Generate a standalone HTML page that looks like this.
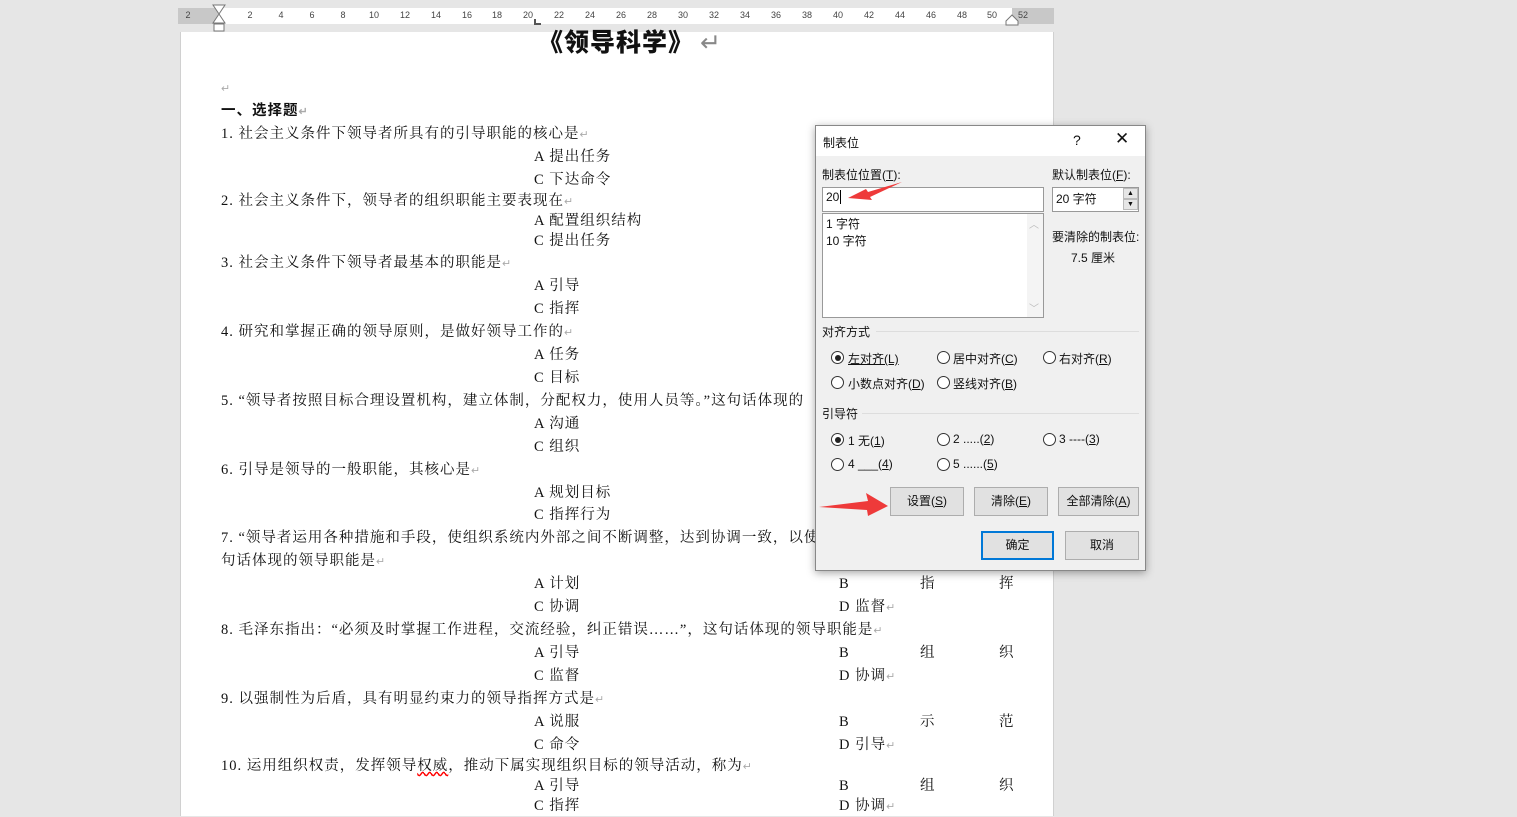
<!DOCTYPE html>
<html><head><meta charset="utf-8"><style>
*{margin:0;padding:0;box-sizing:border-box}
body{width:1517px;height:816px;background:#e6e6e6;position:relative;overflow:hidden;font-family:"Liberation Serif","Noto Serif CJK SC",serif}
.a{position:absolute;white-space:nowrap}
.page{position:absolute;left:180px;top:32px;width:874px;height:784px;background:#fff;border-left:1px solid #d0d0d0;border-right:1px solid #d0d0d0}
.t{position:absolute;white-space:nowrap;font-size:14.5px;line-height:20px;color:#111;letter-spacing:1px;margin-top:2px}
.r{color:#aaa;font-size:11px}
.rn{position:absolute;top:10px;font-family:"Liberation Sans",sans-serif;font-size:9px;color:#444;transform:translateX(-50%)}
.dlg{position:absolute;left:815px;top:125px;width:331px;height:446px;background:#f0f0f0;border:1px solid #888;box-shadow:0 2px 8px rgba(0,0,0,.35);font-family:"Liberation Sans","Noto Sans CJK SC",sans-serif;font-size:12px;color:#111}
.dlg .a{font-size:12px}
.btn{position:absolute;height:29px;background:#e1e1e1;border:1px solid #adadad;text-align:center;line-height:27px;font-size:12px}
.rad{position:absolute;width:13px;height:13px;border:1px solid #333;border-radius:50%;background:#fff;margin-top:-1px}
.rad.on::after{content:"";position:absolute;left:2.5px;top:2.5px;width:6px;height:6px;border-radius:50%;background:#222}
u{text-decoration:underline}
</style></head><body>
<div class="a" style="left:178px;top:8px;width:876px;height:16px;background:#c8c8c8"></div>
<div class="a" style="left:218px;top:8px;width:794px;height:16px;background:#fff"></div>
<div class="rn" style="left:188px">2</div>
<div class="rn" style="left:250px">2</div><div class="rn" style="left:281px">4</div><div class="rn" style="left:312px">6</div><div class="rn" style="left:343px">8</div><div class="rn" style="left:374px">10</div><div class="rn" style="left:405px">12</div><div class="rn" style="left:436px">14</div><div class="rn" style="left:467px">16</div><div class="rn" style="left:497px">18</div><div class="rn" style="left:528px">20</div><div class="rn" style="left:559px">22</div><div class="rn" style="left:590px">24</div><div class="rn" style="left:621px">26</div><div class="rn" style="left:652px">28</div><div class="rn" style="left:683px">30</div><div class="rn" style="left:714px">32</div><div class="rn" style="left:745px">34</div><div class="rn" style="left:776px">36</div><div class="rn" style="left:807px">38</div><div class="rn" style="left:838px">40</div><div class="rn" style="left:869px">42</div><div class="rn" style="left:900px">44</div><div class="rn" style="left:931px">46</div><div class="rn" style="left:962px">48</div><div class="rn" style="left:992px">50</div><div class="rn" style="left:1023px">52</div>
<svg class="a" style="left:212px;top:4px" width="14" height="28"><path d="M1 1H13L7 10L13 19H1L7 10Z" fill="#fff" stroke="#777"/><rect x="2" y="20" width="10" height="7" fill="#fff" stroke="#777"/></svg>
<svg class="a" style="left:1005px;top:13px" width="14" height="14"><path d="M1 12V8L7 2L13 8V12Z" fill="#fff" stroke="#777"/></svg>
<div class="a" style="left:534px;top:19px;width:7px;height:6px;border-left:2px solid #555;border-bottom:2px solid #555"></div>
<div class="page"></div>
<div class="a" style="left:538px;top:26px;font-family:'Liberation Sans','Noto Sans CJK SC',sans-serif;font-weight:900;font-size:25px;letter-spacing:1px;line-height:34px;color:#111">《领导科学》<span style="color:#888;font-weight:400;margin-left:6px">↵</span></div>
<div class="t" style="left:221px;top:76px"><span class="r">↵</span></div>
<div class="t" style="left:221px;top:99px;font-weight:bold;font-family:'Liberation Serif','Noto Sans CJK SC',serif">一、选择题<span class="r">↵</span></div>
<div class="t" style="left:221px;top:122px">1. 社会主义条件下领导者所具有的引导职能的核心是<span class="r">↵</span></div>
<div class="t" style="left:534px;top:145px">A 提出任务</div>
<div class="t" style="left:534px;top:168px">C 下达命令</div>
<div class="t" style="left:221px;top:189px">2. 社会主义条件下，领导者的组织职能主要表现在<span class="r">↵</span></div>
<div class="t" style="left:534px;top:209px">A 配置组织结构</div>
<div class="t" style="left:534px;top:229px">C 提出任务</div>
<div class="t" style="left:221px;top:251px">3. 社会主义条件下领导者最基本的职能是<span class="r">↵</span></div>
<div class="t" style="left:534px;top:274px">A 引导</div>
<div class="t" style="left:534px;top:297px">C 指挥</div>
<div class="t" style="left:221px;top:320px">4. 研究和掌握正确的领导原则，是做好领导工作的<span class="r">↵</span></div>
<div class="t" style="left:534px;top:343px">A 任务</div>
<div class="t" style="left:534px;top:366px">C 目标</div>
<div class="t" style="left:221px;top:389px">5. “领导者按照目标合理设置机构，建立体制，分配权力，使用人员等。”这句话体现的</div>
<div class="t" style="left:534px;top:412px">A 沟通</div>
<div class="t" style="left:534px;top:435px">C 组织</div>
<div class="t" style="left:221px;top:458px">6. 引导是领导的一般职能，其核心是<span class="r">↵</span></div>
<div class="t" style="left:534px;top:481px">A 规划目标</div>
<div class="t" style="left:534px;top:503px">C 指挥行为</div>
<div class="t" style="left:221px;top:526px">7. “领导者运用各种措施和手段，使组织系统内外部之间不断调整，达到协调一致，以使</div>
<div class="t" style="left:221px;top:549px">句话体现的领导职能是<span class="r">↵</span></div>
<div class="t" style="left:534px;top:572px">A 计划</div><div class="t" style="left:839px;top:572px">B</div><div class="t" style="left:920px;top:572px">指</div><div class="t" style="left:999px;top:572px">挥</div>
<div class="t" style="left:534px;top:595px">C 协调</div><div class="t" style="left:839px;top:595px">D 监督<span class="r">↵</span></div>
<div class="t" style="left:221px;top:618px">8. 毛泽东指出：“必须及时掌握工作进程，交流经验，纠正错误……”，这句话体现的领导职能是<span class="r">↵</span></div>
<div class="t" style="left:534px;top:641px">A 引导</div><div class="t" style="left:839px;top:641px">B</div><div class="t" style="left:920px;top:641px">组</div><div class="t" style="left:999px;top:641px">织</div>
<div class="t" style="left:534px;top:664px">C 监督</div><div class="t" style="left:839px;top:664px">D 协调<span class="r">↵</span></div>
<div class="t" style="left:221px;top:687px">9. 以强制性为后盾，具有明显约束力的领导指挥方式是<span class="r">↵</span></div>
<div class="t" style="left:534px;top:710px">A 说服</div><div class="t" style="left:839px;top:710px">B</div><div class="t" style="left:920px;top:710px">示</div><div class="t" style="left:999px;top:710px">范</div>
<div class="t" style="left:534px;top:733px">C 命令</div><div class="t" style="left:839px;top:733px">D 引导<span class="r">↵</span></div>
<div class="t" style="left:221px;top:754px">10. 运用组织权责，发挥领导<span style="text-decoration:underline wavy red">权威</span>，推动下属实现组织目标的领导活动，称为<span class="r">↵</span></div>
<div class="t" style="left:534px;top:774px">A 引导</div><div class="t" style="left:839px;top:774px">B</div><div class="t" style="left:920px;top:774px">组</div><div class="t" style="left:999px;top:774px">织</div>
<div class="t" style="left:534px;top:794px">C 指挥</div><div class="t" style="left:839px;top:794px">D 协调<span class="r">↵</span></div>

<div class="dlg">
 <div class="a" style="left:0;top:0;width:329px;height:30px;background:#fff"></div>
 <div class="a" style="left:7px;top:8px">制表位</div>
 <div class="a" style="left:257px;top:6px;font-size:14px">?</div>
 <div class="a" style="left:299px;top:3px;font-size:17px">✕</div>
 <div class="a" style="left:6px;top:40px">制表位位置(<u>T</u>):</div>
 <div class="a" style="left:6px;top:61px;width:222px;height:25px;background:#fff;border:1px solid #999"></div>
 <div class="a" style="left:10px;top:64px">20<span style="border-left:1px solid #000;margin-left:1px"></span></div>
 <div class="a" style="left:6px;top:87px;width:222px;height:105px;background:#fff;border:1px solid #999"></div>
 <div class="a" style="left:10px;top:89px">1 字符</div>
 <div class="a" style="left:10px;top:106px">10 字符</div>
 <div class="a" style="left:211px;top:88px;width:16px;height:103px;background:#f4f4f4"></div>
 <div class="a" style="left:213px;top:90px;color:#bbb;font-size:10px">︿</div>
 <div class="a" style="left:213px;top:174px;color:#bbb;font-size:10px">﹀</div>
 <div class="a" style="left:236px;top:40px">默认制表位(<u>F</u>):</div>
 <div class="a" style="left:236px;top:61px;width:87px;height:25px;background:#fff;border:1px solid #999"></div>
 <div class="a" style="left:240px;top:64px">20 字符</div>
 <div class="a" style="left:307px;top:62px;width:15px;height:11px;background:#e6e6e6;border:1px solid #bbb;font-size:7px;text-align:center;line-height:9px">▲</div>
 <div class="a" style="left:307px;top:73px;width:15px;height:11px;background:#e6e6e6;border:1px solid #bbb;font-size:7px;text-align:center;line-height:9px">▼</div>
 <div class="a" style="left:236px;top:102px">要清除的制表位:</div>
 <div class="a" style="left:255px;top:123px">7.5 厘米</div>
 <div class="a" style="left:6px;top:197px">对齐方式</div>
 <div class="a" style="left:60px;top:205px;width:263px;height:1px;background:#ddd"></div>
 <div class="rad on" style="left:15px;top:226px"></div><div class="a" style="left:32px;top:224px"><u>左对齐(L)</u></div>
 <div class="rad" style="left:121px;top:226px"></div><div class="a" style="left:137px;top:224px">居中对齐(<u>C</u>)</div>
 <div class="rad" style="left:227px;top:226px"></div><div class="a" style="left:243px;top:224px">右对齐(<u>R</u>)</div>
 <div class="rad" style="left:15px;top:251px"></div><div class="a" style="left:32px;top:249px">小数点对齐(<u>D</u>)</div>
 <div class="rad" style="left:121px;top:251px"></div><div class="a" style="left:137px;top:249px">竖线对齐(<u>B</u>)</div>
 <div class="a" style="left:6px;top:279px">引导符</div>
 <div class="a" style="left:46px;top:287px;width:277px;height:1px;background:#ddd"></div>
 <div class="rad on" style="left:15px;top:308px"></div><div class="a" style="left:32px;top:306px">1 无(<u>1</u>)</div>
 <div class="rad" style="left:121px;top:308px"></div><div class="a" style="left:137px;top:306px">2 .....(<u>2</u>)</div>
 <div class="rad" style="left:227px;top:308px"></div><div class="a" style="left:243px;top:306px">3 ----(<u>3</u>)</div>
 <div class="rad" style="left:15px;top:333px"></div><div class="a" style="left:32px;top:331px">4 ___(<u>4</u>)</div>
 <div class="rad" style="left:121px;top:333px"></div><div class="a" style="left:137px;top:331px">5 ......(<u>5</u>)</div>
 <div class="btn" style="left:74px;top:361px;width:74px">设置(<u>S</u>)</div>
 <div class="btn" style="left:158px;top:361px;width:74px">清除(<u>E</u>)</div>
 <div class="btn" style="left:242px;top:361px;width:81px">全部清除(<u>A</u>)</div>
 <div class="btn" style="left:165px;top:405px;width:73px;border:2px solid #0078d7;line-height:25px">确定</div>
 <div class="btn" style="left:249px;top:405px;width:74px">取消</div>
</div>
<svg class="a" style="left:0;top:0" width="1517" height="816">
 <path d="M848 198L866 189L868 192L902 182L870 197L872 200Z" fill="#ee3a3a"/>
 <path d="M819 507L868 501L866 493L888 506L868 516L867 510Z" fill="#ee3a3a"/>
</svg>
</body></html>
